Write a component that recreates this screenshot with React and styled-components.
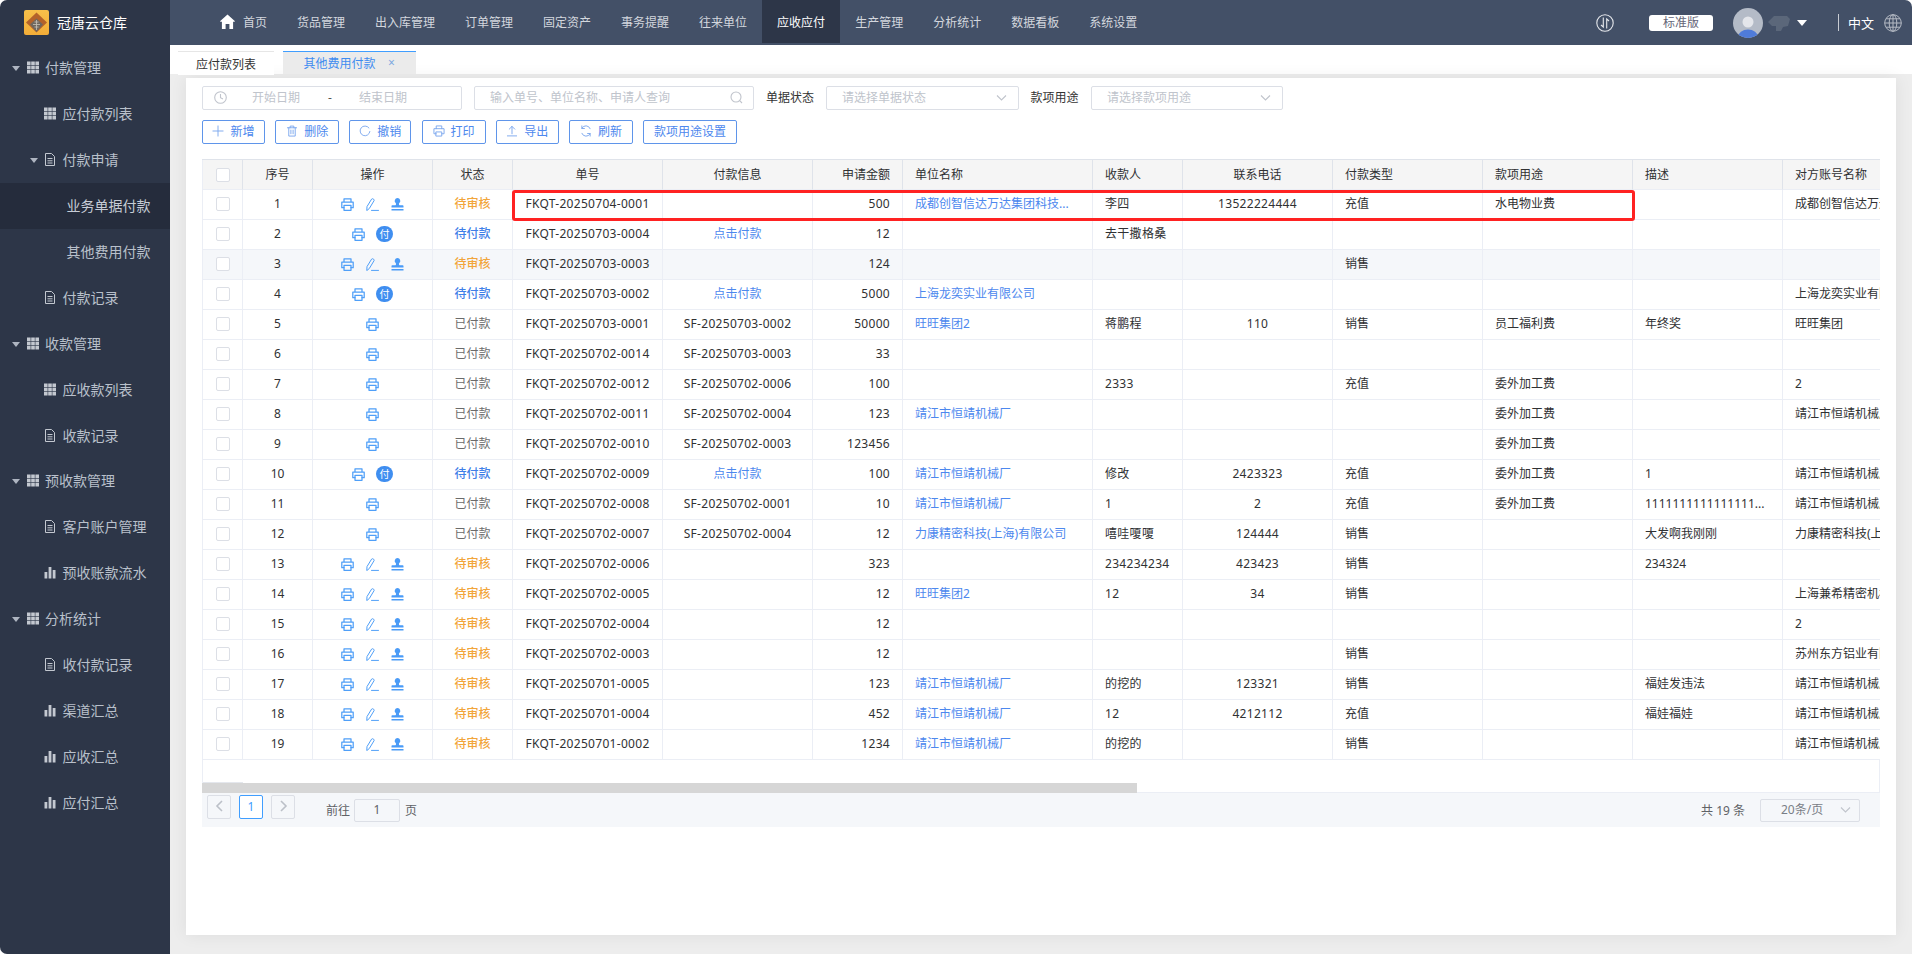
import React from "react";
import styled, { createGlobalStyle } from "styled-components";

const FONT = `"Noto Sans", "Noto Sans CJK SC", sans-serif`;
const BLUE = "#4d88ee";

const Global = createGlobalStyle`
  *, *::before, *::after { box-sizing: border-box; }
  html, body { margin: 0; padding: 0; background: #fff; }
  body { font-family: ${FONT}; font-size: 12px; color: #303133; }
`;

const Shell = styled.div`
  display: flex; width: 1912px; height: 954px; overflow: hidden;
  border-radius: 7px 7px 0 7px; background: #fff;
`;

/* Sidebar */
const Side = styled.aside`
  width: 170px; flex: none; background: #2d3648; color: #b9c0cb; font-size: 14px;
`;
const Brand = styled.div`
  height: 45px; display: flex; align-items: center; gap: 8px; padding-left: 24px;
  color: #fff; font-size: 14px;
`;
const MenuRow = styled.div`
  height: 45.9px; display: flex; align-items: center;
  padding-left: ${p => p.$level === 0 ? 12 : p.$level === 1 ? 44 : 66.5}px;
  background: ${p => p.$active ? "#252c3c" : "transparent"};
  ${p => p.$caretInset ? "padding-left: 30px;" : ""}
  ${p => p.$active ? "color:#c6ccd6;" : ""}
`;
const MenuText = styled.span`margin-bottom: 1px;`;
const Caret = styled.i`
  width: 0; height: 0; flex: none; margin-right: ${p => p.$gap}px; margin-top: 2px;
  border-left: 4px solid transparent; border-right: 4px solid transparent;
  border-top: 5px solid #aeb5c1;
`;
const MenuIcon = styled.svg`
  width: 12px; height: 13px; flex: none; margin-right: 6.5px; fill: #c3c8d0;
`;

/* Main column */
const Main = styled.div`
  flex: 1; min-width: 0; display: flex; flex-direction: column;
`;
const Header = styled.header`
  height: 45px; flex: none; background: #435067; display: flex; align-items: flex-start;
  padding-left: 35px; color: #d3d7de;
`;
const NavItem = styled.div`
  height: 43px; padding: 0 15px; display: flex; align-items: center; gap: 8px; font-size: 12px;
  background: ${p => p.$active ? "#2d3648" : "transparent"};
  color: ${p => p.$active ? "#fff" : "#d3d7de"};
`;
const HeadRight = styled.div`
  margin-left: auto; height: 45px; display: flex; align-items: center; padding-right: 10px;
`;
const Badge = styled.div`
  width: 64px; height: 16px; margin: 0 20px 0 35px; background: #fff; border-radius: 3px;
  color: #667; font-size: 12px; line-height: 16px; text-align: center;
`;
const Avatar = styled.svg`width: 30px; height: 30px; flex: none;`;
const Triangle = styled.i`
  margin: 0 31px 0 7px; width: 0; height: 0;
  border-left: 5px solid transparent; border-right: 5px solid transparent; border-top: 6px solid #fff;
`;
const Divider = styled.i`width: 1px; height: 17px; background: #c8ccd3; margin-right: 9px;`;
const Lang = styled.span`color: #fff; font-size: 13px; margin-right: 10px;`;

/* Tabs */
const TabBar = styled.div`
  height: 29px; flex: none; display: flex; align-items: flex-end; gap: 9px; padding-left: 8px; background: #fff;
`;
const Tab = styled.div`
  height: ${p => p.$active ? 23 : 24}px; width: ${p => p.$active ? 132.5 : 96}px;
  display: flex; align-items: center; justify-content: center; gap: 12.5px;
  font-size: 12px; margin-bottom: ${p => p.$active ? 0 : -1}px;
  background: ${p => p.$active ? "#ebebeb" : "#fff"};
  color: ${p => p.$active ? "#3f8cf0" : "#333"};
  border-top: 1px solid ${p => p.$active ? "#409eff" : "#e6e6e6"};
  position: relative;
`;
const TabClose = styled.span`color: #7fa8e0; font-size: 12px; line-height: 1;`;

const Content = styled.div`
  flex: 1; min-height: 0; background: #ededed; padding: 4px 16px 19px;
`;
const Card = styled.div`
  height: 100%; background: #fff; padding: 8px 16px 0;
  box-shadow: 0 0 16px rgba(0, 0, 0, 0.07);
`;

/* Filters */
const FilterRow = styled.div`
  display: flex; align-items: center; height: 24px;
`;
const Field = styled.div`
  height: 24px; width: ${p => p.$w}px; margin-right: ${p => p.$mr}px; flex: none;
  border: 1px solid #dcdfe6; border-radius: 2px; display: flex; align-items: center;
  color: #c0c4cc; font-size: 12px; padding-left: ${p => p.$pl}px; padding-bottom: 2px;
  justify-content: ${p => p.$between ? "space-between" : "flex-start"};
  padding-right: ${p => p.$between ? 10 : 0}px;
`;
const DatePart = styled.span`
  margin-left: ${p => p.$ml}px; color: ${p => p.$dark ? "#555" : "#c0c4cc"};
`;
const FilterLabel = styled.span`
  width: ${p => p.$w}px; flex: none; font-size: 12px; color: #333; padding-bottom: 2px;
`;
const FieldIcon = styled.svg`
  width: 13px; height: 13px; flex: none; fill: none; stroke: #c0c4cc; stroke-width: 1.1;
`;

/* Toolbar */
const Toolbar = styled.div`
  display: flex; gap: 10.2px; margin-top: 10px; height: 24px;
`;
const Btn = styled.button`
  height: 24px; width: ${p => p.$w}px; flex: none; padding: 0 0 2px; background: #fff;
  border: 1px solid #5f95ea; border-radius: 2px; display: flex; align-items: center; justify-content: center; gap: 6px;
  font: 12px ${FONT}; color: ${BLUE};
`;
const BtnIcon = styled.svg`
  width: 12px; height: 12px; flex: none; fill: none; stroke: #79a6ee; stroke-width: 1; stroke-linecap: round; stroke-linejoin: round;
`;

/* Table */
const TableFrame = styled.div`
  position: relative; margin-top: 15px; border-top: 1px solid #dfe3ea; width: 1678px;
`;
const Clip = styled.div`overflow: hidden; width: 1678px;`;
const Table = styled.table`
  table-layout: fixed; border-collapse: separate; border-spacing: 0; width: 1731px; font-size: 12px;
`;
const Th = styled.th`
  height: 30px; font-weight: 400; color: #303133; background: #f5f5f5;
  border-right: 1px solid #dfe3ea; border-bottom: 1px solid #ebeef5;
  text-align: ${p => p.$align || "left"}; padding: 0 12px 2px;
  white-space: nowrap; overflow: hidden;
  &:first-child { border-left: 1px solid #ebeef5; }
`;
const Td = styled.td`
  height: 30px; padding: 0 12px 3px; color: ${p => p.$color || "#303133"};
  text-align: ${p => p.$align || "left"}; white-space: nowrap; overflow: hidden;
  border-right: 1px solid #ebeef5; border-bottom: 1px solid #ebeef5;
  background: ${p => p.$hover ? "#f5f7fa" : "#fff"};
  font-weight: ${p => p.$bold ? 500 : 400};
  letter-spacing: ${p => p.$num ? "0.3px" : "normal"};
  &:first-child { border-left: 1px solid #ebeef5; }
`;
const Check = styled.span`
  display: inline-block; width: 14px; height: 14px; border: 1px solid #dcdfe6; border-radius: 2px; background: #fff; vertical-align: middle;
`;
const Actions = styled.div`
  display: flex; justify-content: center; align-items: center; gap: 12px; margin-top: 2px;
`;
const ActIcon = styled.svg`
  width: 13px; height: 13px; flex: none; fill: none; stroke: #4f9ff8; stroke-width: 1.25; stroke-linejoin: round; stroke-linecap: round;
`;
const PayDot = styled.span`
  width: 16.5px; height: 16.5px; border-radius: 50%; background: #3f8ef0; color: #fff; font-size: 10px; line-height: 16px; text-align: center; flex: none; margin-left: -1px;
`;
const Blank = styled.div`
  height: 23px; border-left: 1px solid #ebeef5; border-right: 1px solid #ebeef5; position: relative;
  &::after { content: ""; position: absolute; left: 0; bottom: 0; width: 40px; height: 1px; background: #e4e7ed; }
`;
const Track = styled.div`
  height: 10px; background: #fff; border-bottom: 1px solid #ebeef5; border-right: 1px solid #ebeef5;
`;
const Thumb = styled.div`width: 935px; height: 10px; background: #d6d6d6;`;
const RedBox = styled.div`
  position: absolute; left: 310px; top: 29.5px; width: 1122.5px; height: 31.5px;
  border: 3px solid #ff2222; border-radius: 3px; pointer-events: none;
`;

/* Pager */
const Pager = styled.div`
  width: 1678px; height: 34px; background: #f5f7fa; display: flex; align-items: center; padding: 0 20px 0 5px; color: #606266; font-size: 12px;
`;
const PagerText = styled.span`padding-bottom: 1px;`;
const PageBtn = styled.div`
  width: 24px; height: 24px; margin: -6px ${p => p.$mr}px 0 0; flex: none; border-radius: 2px; padding-bottom: 2px;
  border: 1px solid ${p => p.$active ? "#409eff" : "#dcdfe6"};
  background: ${p => p.$active ? "#fff" : "#f5f7fa"};
  color: ${p => p.$active ? "#409eff" : "#b9bdc5"}; display: flex; align-items: center; justify-content: center;
`;
const JumpInput = styled.div`
  width: 46px; height: 23px; margin: 0 5px 0 4px; padding-bottom: 2px; border: 1px solid #dcdfe6; border-radius: 2px; display: flex; align-items: center; justify-content: center;
`;
const Total = styled(PagerText)`margin-left: auto; margin-right: 15px;`;
const SizeSelect = styled.div`
  width: 100px; height: 23px; padding: 0 7px 2px 20px; border: 1px solid #dcdfe6; border-radius: 2px; display: flex; align-items: center; justify-content: space-between; color: #7a7e86;
`;

const Grid = () => (
  <MenuIcon viewBox="0 0 12 13">
    {[0, 4.2, 8.4].flatMap(x => [0.5, 4.7, 8.9].map(y => <rect key={x + "-" + y} x={x} y={y} width="3.6" height="3.6" />))}
  </MenuIcon>
);
const Doc = () => (
  <MenuIcon viewBox="0 0 12 13" style={{ fill: "none", stroke: "#c3c8d0", strokeWidth: 1 }}>
    <path d="M1.5.5h6l3 3v9h-9zM3.5 5.5h5M3.5 7.8h5M3.5 10h5" />
  </MenuIcon>
);
const Bars = () => (
  <MenuIcon viewBox="0 0 12 13">
    <rect x="0.5" y="6" width="2.8" height="6.5" /><rect x="4.6" y="1" width="2.8" height="11.5" /><rect x="8.7" y="4" width="2.8" height="8.5" />
  </MenuIcon>
);
const ICONS = { grid: Grid, doc: Doc, bars: Bars };

const MENU = [
  { t: "付款管理", i: "grid", l: 0, c: 1 },
  { t: "应付款列表", i: "grid", l: 1 },
  { t: "付款申请", i: "doc", l: 1, c: 1, inset: 1 },
  { t: "业务单据付款", l: 2, a: 1 },
  { t: "其他费用付款", l: 2 },
  { t: "付款记录", i: "doc", l: 1 },
  { t: "收款管理", i: "grid", l: 0, c: 1 },
  { t: "应收款列表", i: "grid", l: 1 },
  { t: "收款记录", i: "doc", l: 1 },
  { t: "预收款管理", i: "grid", l: 0, c: 1 },
  { t: "客户账户管理", i: "doc", l: 1 },
  { t: "预收账款流水", i: "bars", l: 1 },
  { t: "分析统计", i: "grid", l: 0, c: 1 },
  { t: "收付款记录", i: "doc", l: 1 },
  { t: "渠道汇总", i: "bars", l: 1 },
  { t: "应收汇总", i: "bars", l: 1 },
  { t: "应付汇总", i: "bars", l: 1 },
];

const NAV = ["货品管理", "出入库管理", "订单管理", "固定资产", "事务提醒", "往来单位", "应收应付", "生产管理", "分析统计", "数据看板", "系统设置"];

const COLS = [
  { t: "", w: 41, a: "center" }, { t: "序号", w: 70, a: "center" }, { t: "操作", w: 120, a: "center" },
  { t: "状态", w: 80, a: "center" }, { t: "单号", w: 150, a: "center" }, { t: "付款信息", w: 150, a: "center" },
  { t: "申请金额", w: 90, a: "right" }, { t: "单位名称", w: 190 }, { t: "收款人", w: 90 },
  { t: "联系电话", w: 150, a: "center" }, { t: "付款类型", w: 150 }, { t: "款项用途", w: 150 },
  { t: "描述", w: 150 }, { t: "对方账号名称", w: 150 },
];

const JJ = "靖江市恒靖机械厂";
const A = "待审核", B = "待付款", C = "已付款";
const LINK = "点击付款";
const ROWS = [
  [A, "FKQT-20250704-0001", "", "500", "成都创智信达万达集团科技...", "李四", "13522224444", "充值", "水电物业费", "", "成都创智信达万达集团科技有限公司"],
  [B, "FKQT-20250703-0004", LINK, "12", "", "去干撒格桑", "", "", "", "", ""],
  [A, "FKQT-20250703-0003", "", "124", "", "", "", "销售", "", "", ""],
  [B, "FKQT-20250703-0002", LINK, "5000", "上海龙奕实业有限公司", "", "", "", "", "", "上海龙奕实业有限公司"],
  [C, "FKQT-20250703-0001", "SF-20250703-0002", "50000", "旺旺集团2", "蒋鹏程", "110", "销售", "员工福利费", "年终奖", "旺旺集团"],
  [C, "FKQT-20250702-0014", "SF-20250703-0003", "33", "", "", "", "", "", "", ""],
  [C, "FKQT-20250702-0012", "SF-20250702-0006", "100", "", "2333", "", "充值", "委外加工费", "", "2"],
  [C, "FKQT-20250702-0011", "SF-20250702-0004", "123", JJ, "", "", "", "委外加工费", "", JJ],
  [C, "FKQT-20250702-0010", "SF-20250702-0003", "123456", "", "", "", "", "委外加工费", "", ""],
  [B, "FKQT-20250702-0009", LINK, "100", JJ, "修改", "2423323", "充值", "委外加工费", "1", JJ],
  [C, "FKQT-20250702-0008", "SF-20250702-0001", "10", JJ, "1", "2", "充值", "委外加工费", "1111111111111111...", JJ],
  [C, "FKQT-20250702-0007", "SF-20250702-0004", "12", "力康精密科技(上海)有限公司", "嘻哇嗄嗄", "124444", "销售", "", "大发啊我刚刚", "力康精密科技(上海)有限公司"],
  [A, "FKQT-20250702-0006", "", "323", "", "234234234", "423423", "销售", "", "234324", ""],
  [A, "FKQT-20250702-0005", "", "12", "旺旺集团2", "12", "34", "销售", "", "", "上海兼希精密机械有限公司"],
  [A, "FKQT-20250702-0004", "", "12", "", "", "", "", "", "", "2"],
  [A, "FKQT-20250702-0003", "", "12", "", "", "", "销售", "", "", "苏州东方铝业有限公司"],
  [A, "FKQT-20250701-0005", "", "123", JJ, "的挖的", "123321", "销售", "", "福娃发违法", JJ],
  [A, "FKQT-20250701-0004", "", "452", JJ, "12", "4212112", "充值", "", "福娃福娃", JJ],
  [A, "FKQT-20250701-0002", "", "1234", JJ, "的挖的", "", "销售", "", "", JJ],
];

const Print = () => (
  <ActIcon viewBox="0 0 13 13">
    <path d="M3 4V.8h7V4M3 9.7H.8V4h11.4v5.7H10" />
    <rect x="3" y="7.3" width="7" height="5" />
  </ActIcon>
);
const Pencil = () => (
  <ActIcon viewBox="0 0 13 13" style={{ strokeWidth: 1 }}>
    <path d="M.8 12.2 1 8.6 5.6 1.1a.9.9 0 0 1 1.2-.3l1 .6a.9.9 0 0 1 .3 1.2L3.5 10.2zM5.5 12.4h7" />
  </ActIcon>
);
const Stamp = () => (
  <ActIcon viewBox="0 0 13 13" style={{ fill: "#4a9bf7", stroke: "none" }}>
    <path d="M6.5 0a2.9 2.9 0 0 1 1.8 5.1c-.5.5-.5 1.6.2 2.2h3.2c.5 0 .8.3.8.7v1.5H.5V8c0-.4.3-.7.8-.7h3.2c.7-.6.7-1.7.2-2.2A2.9 2.9 0 0 1 6.5 0zM.5 11h12v1.4H.5z" />
  </ActIcon>
);

function RowActions({ status }) {
  return (
    <Actions>
      <Print />
      {status === A && <><Pencil /><Stamp /></>}
      {status === B && <PayDot>付</PayDot>}
    </Actions>
  );
}

const statusStyle = { [A]: { c: "#f2a53a", b: 1 }, [B]: { c: "#3f7fe8", b: 1 }, [C]: { c: "#6b6b6b" } };

const Chevron = () => (
  <FieldIcon viewBox="0 0 13 13"><path d="M2 4.5l4.5 4.5L11 4.5" /></FieldIcon>
);

export default function App() {
  return (
    <>
      <Global />
      <Shell>
        <Side>
          <Brand>
            <svg width="25" height="25" viewBox="0 0 25 25">
              <defs>
                <linearGradient id="lg" x1="0" y1="0" x2="0" y2="1">
                  <stop offset="0" stopColor="#f7c04a" /><stop offset="1" stopColor="#f3ad38" />
                </linearGradient>
              </defs>
              <rect width="25" height="25" rx="2" fill="url(#lg)" />
              <path d="M12.5 2.5 23 12.5 12.5 22.5 2 12.5z" fill="#b4632a" />
              <path d="M12.5 8.5 19 14.5 12.5 22 6 14.5z" fill="#6f675f" />
              <path d="M9 14.5h7M10.5 12h4M10.5 17h4M12.5 10v10" stroke="#c9c2b8" strokeWidth="0.8" />
            </svg>
            <MenuText>冠唐云仓库</MenuText>
          </Brand>
          {MENU.map(m => {
            const I = m.i && ICONS[m.i];
            return (
              <MenuRow key={m.t} $level={m.l} $active={m.a} $caretInset={m.inset}>
                {m.c && <Caret $gap={m.inset ? 6 : 6.5} />}
                {I && <I />}
                <MenuText>{m.t}</MenuText>
              </MenuRow>
            );
          })}
        </Side>
        <Main>
          <Header>
            <NavItem>
              <svg width="15" height="15" viewBox="0 0 15 15" fill="#fff">
                <path d="M7.5.5 15 7.2l-1 .9-.9-.7V15H9.4v-5H5.6v5H1.9V7.4L1 8.1 0 7.2z" />
              </svg>
              首页
            </NavItem>
            {NAV.map(n => <NavItem key={n} $active={n === "应收应付"}>{n}</NavItem>)}
            <HeadRight>
              <svg width="18" height="18" viewBox="0 0 18 18" fill="none" stroke="#e6e8ec" strokeWidth="1.1">
                <circle cx="9" cy="9" r="8.2" />
                <path d="M7.3 3.5v9.5L5 11M10.7 14.5V5L13 7" />
              </svg>
              <Badge>标准版</Badge>
              <Avatar viewBox="0 0 30 30">
                <clipPath id="av"><circle cx="15" cy="15" r="15" /></clipPath>
                <g clipPath="url(#av)">
                  <rect width="30" height="30" fill="#b4bbc7" />
                  <circle cx="15" cy="14" r="5.5" fill="#e4e6eb" />
                  <ellipse cx="15" cy="29" rx="10" ry="7.5" fill="#4f7bd9" />
                </g>
              </Avatar>
              <svg width="22" height="17" viewBox="0 0 22 17" style={{ marginLeft: 5 }}>
                <path d="M0 8 6 2h13l3 3-2 7-5 1-2 4H8V12H4z" fill="#5b677a" />
              </svg>
              <Triangle />
              <Divider />
              <Lang>中文</Lang>
              <svg width="18" height="18" viewBox="0 0 18 18" fill="none" stroke="#b5bac4" strokeWidth="1">
                <circle cx="9" cy="9" r="8.3" />
                <ellipse cx="9" cy="9" rx="3.8" ry="8.3" />
                <path d="M9 .7v16.6M.7 9h16.6M2 4.8h14M2 13.2h14" />
              </svg>
            </HeadRight>
          </Header>
          <TabBar>
            <Tab>应付款列表</Tab>
            <Tab $active>其他费用付款<TabClose>×</TabClose></Tab>
          </TabBar>
          <Content>
            <Card>
              <FilterRow>
                <Field $w={260} $mr={12} $pl={11}>
                  <FieldIcon viewBox="0 0 13 13"><circle cx="6.5" cy="6.5" r="5.8" /><path d="M6.5 3v3.7L9 8" /></FieldIcon>
                  <DatePart $ml={25}>开始日期</DatePart>
                  <DatePart $ml={28} $dark>-</DatePart>
                  <DatePart $ml={27}>结束日期</DatePart>
                </Field>
                <Field $w={279.5} $mr={12.5} $pl={15} $between>
                  输入单号、单位名称、申请人查询
                  <FieldIcon viewBox="0 0 13 13"><circle cx="6" cy="6" r="5" /><path d="M9.7 9.7 12 12" /></FieldIcon>
                </Field>
                <FilterLabel $w={60}>单据状态</FilterLabel>
                <Field $w={193} $mr={11.5} $pl={15} $between>请选择单据状态<Chevron /></Field>
                <FilterLabel $w={60.5}>款项用途</FilterLabel>
                <Field $w={192} $mr={0} $pl={15} $between>请选择款项用途<Chevron /></Field>
              </FilterRow>
              <Toolbar>
                <Btn $w={63}><BtnIcon viewBox="0 0 13 13"><path d="M6.5 1v11M1 6.5h11" /></BtnIcon>新增</Btn>
                <Btn $w={64}><BtnIcon viewBox="0 0 13 13"><path d="M1.5 3h10M4.5 3V1.2h4V3M3 3v9h7V3M5.3 5.5v4M7.7 5.5v4" /></BtnIcon>删除</Btn>
                <Btn $w={62}><BtnIcon viewBox="0 0 13 13"><path d="M10.8 3.2A5.3 5.3 0 1 0 11.8 7" /></BtnIcon>撤销</Btn>
                <Btn $w={64}><BtnIcon viewBox="0 0 13 13"><path d="M3.5 4V1h6v3M3.5 9.5H1V4h11v5.5H9.5M3.5 7.5h6V12h-6z" /></BtnIcon>打印</Btn>
                <Btn $w={63}><BtnIcon viewBox="0 0 13 13"><path d="M6.5 9.5V1.5M3.5 4.5l3-3 3 3M1.5 11.8h10" /></BtnIcon>导出</Btn>
                <Btn $w={64}><BtnIcon viewBox="0 0 13 13"><path d="M11 4a5 5 0 0 0-9-.5M2 9a5 5 0 0 0 9 .5M2 1v2.8h2.8M11 12V9.2H8.2" /></BtnIcon>刷新</Btn>
                <Btn $w={94}>款项用途设置</Btn>
              </Toolbar>
              <TableFrame>
                <Clip>
                  <Table>
                    <colgroup>{COLS.map((c, i) => <col key={i} style={{ width: c.w }} />)}</colgroup>
                    <thead>
                      <tr>{COLS.map((c, i) => <Th key={i} $align={c.a}>{i === 0 ? <Check /> : c.t}</Th>)}</tr>
                    </thead>
                    <tbody>
                      {ROWS.map((r, idx) => {
                        const [status, code, info, amount, company, payee, phone, type, use, desc, acct] = r;
                        const h = idx === 2;
                        const s = statusStyle[status];
                        return (
                          <tr key={idx}>
                            <Td $align="center" $hover={h}><Check /></Td>
                            <Td $align="center" $hover={h}>{idx + 1}</Td>
                            <Td $align="center" $hover={h}><RowActions status={status} /></Td>
                            <Td $align="center" $hover={h} $color={s.c} $bold={s.b}>{status}</Td>
                            <Td $align="center" $hover={h} $num>{code}</Td>
                            <Td $align="center" $hover={h} $color={info === LINK ? BLUE : undefined} $num={info !== LINK}>{info}</Td>
                            <Td $align="right" $hover={h} $num>{amount}</Td>
                            <Td $hover={h} $color={BLUE}>{company}</Td>
                            <Td $hover={h} $num>{payee}</Td>
                            <Td $align="center" $hover={h} $num>{phone}</Td>
                            <Td $hover={h}>{type}</Td>
                            <Td $hover={h}>{use}</Td>
                            <Td $hover={h}>{desc}</Td>
                            <Td $hover={h}>{acct}</Td>
                          </tr>
                        );
                      })}
                    </tbody>
                  </Table>
                </Clip>
                <Blank />
                <Track><Thumb /></Track>
                <RedBox />
              </TableFrame>
              <Pager>
                <PageBtn $mr={8}><svg width="9" height="12" viewBox="0 0 9 12" fill="none" stroke="#bcc0c8" strokeWidth="1.6"><path d="M7 1 2 6l5 5" /></svg></PageBtn>
                <PageBtn $mr={8} $active>1</PageBtn>
                <PageBtn $mr={31}><svg width="9" height="12" viewBox="0 0 9 12" fill="none" stroke="#bcc0c8" strokeWidth="1.6"><path d="M2 1l5 5-5 5" /></svg></PageBtn>
                <PagerText>前往</PagerText>
                <JumpInput>1</JumpInput>
                <PagerText>页</PagerText>
                <Total>共 19 条</Total>
                <SizeSelect>20条/页<Chevron /></SizeSelect>
              </Pager>
            </Card>
          </Content>
        </Main>
      </Shell>
    </>
  );
}
